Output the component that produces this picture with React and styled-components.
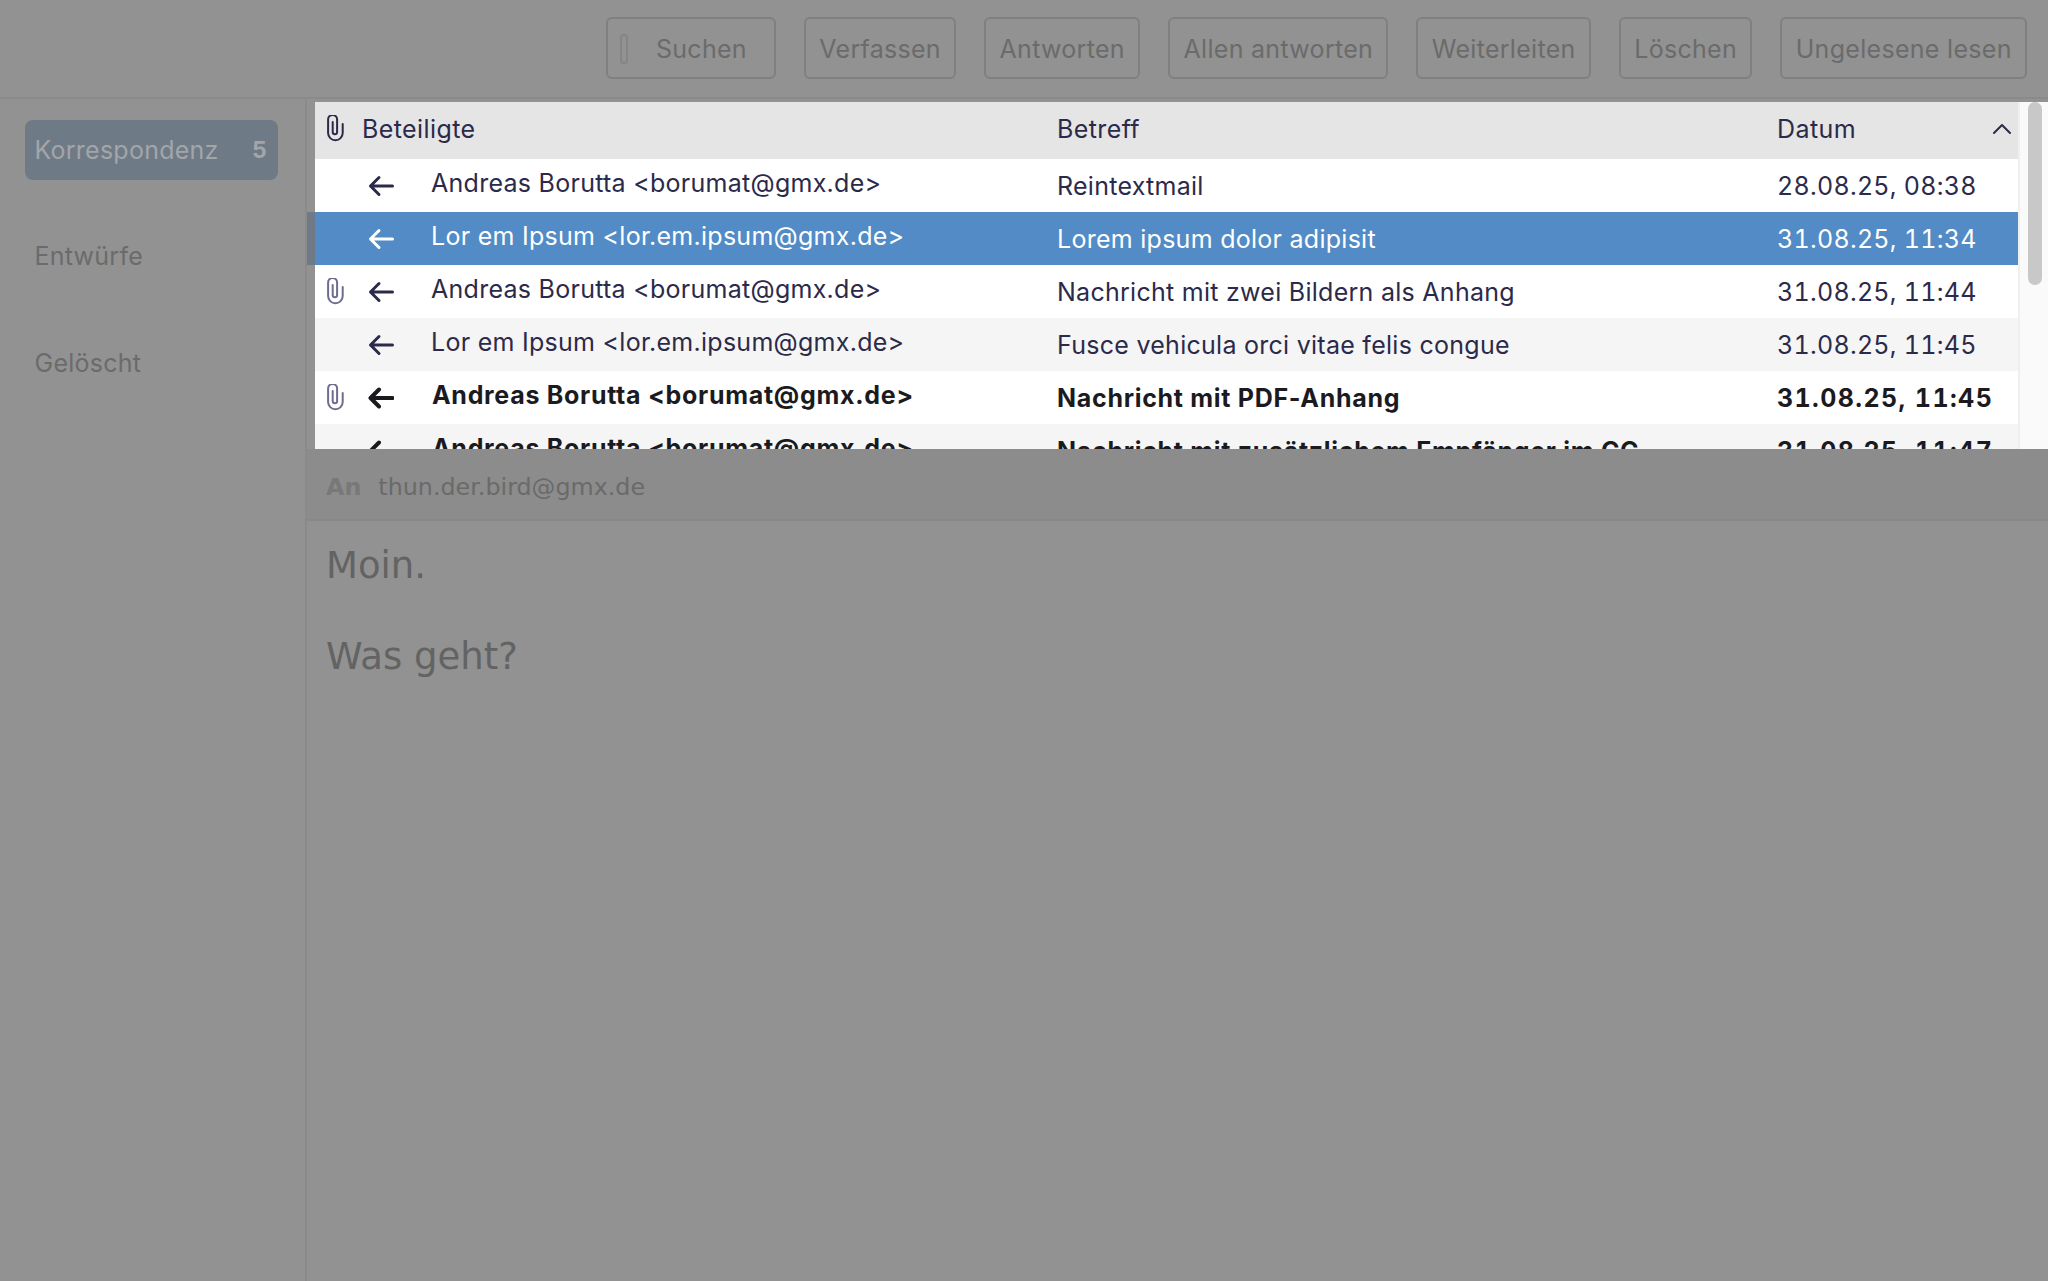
import styled, { createGlobalStyle } from "styled-components";

const GlobalStyle = createGlobalStyle`
  html, body {
    margin: 0;
    padding: 0;
    height: 100%;
    background: #929292;
  }
  * {
    box-sizing: border-box;
  }
`;

const Page = styled.div`
  width: 2048px;
  height: 1281px;
  display: flex;
  flex-direction: column;
  overflow: hidden;
  background: #929292;
  font-family: Inter, "Liberation Sans", sans-serif;
`;

const Toolbar = styled.div`
  height: 99px;
  flex: none;
  display: flex;
  justify-content: flex-end;
  align-items: flex-start;
  gap: 28px;
  padding: 17px 21px 0 0;
  border-bottom: 2px solid #8a8a8a;
`;

const ToolButton = styled.div`
  height: 62px;
  display: flex;
  align-items: center;
  padding: 2px 13.3px 0;
  border: 2px solid #808080;
  border-radius: 6px;
  color: #6b6b6b;
  font-size: 25px;
  letter-spacing: 0.3px;
  white-space: nowrap;
`;

const SearchButton = styled(ToolButton)`
  padding: 2px 27px 0 12px;
  gap: 28px;
`;

const SearchPill = styled.span`
  width: 8px;
  height: 30px;
  border: 2px solid #858585;
  border-radius: 4px;
`;

const Body = styled.div`
  flex: 1;
  display: flex;
  min-height: 0;
`;

const Sidebar = styled.div`
  width: 307px;
  flex: none;
  display: flex;
  flex-direction: column;
  gap: 47px;
  padding: 21px 27px 0 25px;
  border-right: 2px solid #8a8a8a;
`;

const Folder = styled.div`
  height: 60px;
  display: flex;
  align-items: center;
  justify-content: space-between;
  padding: ${(p) => (p.$active ? "0 11px 0 9.5px" : "0 11px 2px 9.5px")};
  border-radius: 8px;
  background: ${(p) => (p.$active ? "#6f7a87" : "transparent")};
  color: ${(p) => (p.$active ? "#a3a5a9" : "#6b6b6b")};
  font-size: 25px;
  letter-spacing: 0.25px;
`;

const Count = styled.span`
  font-weight: 700;
  font-size: 23px;
`;

const Main = styled.div`
  flex: 1;
  min-width: 0;
  display: flex;
  flex-direction: column;
`;

const ListPane = styled.div`
  height: 350px;
  flex: none;
  display: flex;
  padding: 3px 0 0 8px;
`;

const List = styled.div`
  flex: 1;
  min-width: 0;
  height: 347px;
  background: #fff;
`;

const ListClip = styled.div`
  height: 100%;
  overflow: hidden;
  margin-left: -8px;
  padding-left: 8px;
`;

const Scrollbar = styled.div`
  width: 30px;
  flex: none;
  padding: 0 6px 0 8px;
  background: #fafafa;
  border-left: 2px solid #efefef;
`;

const Thumb = styled.div`
  height: 183px;
  border-radius: 8px;
  background: #c8c8c8;
`;

const HeadRow = styled.div`
  height: 57px;
  display: grid;
  grid-template-columns: 47px 695px 720px 1fr;
  align-items: center;
  padding-bottom: 3px;
  background: #e5e5e5;
  color: #2c2a4a;
  font-size: 25px;
  letter-spacing: 0.4px;
`;

const Row = styled.div`
  position: relative;
  height: 53px;
  display: grid;
  grid-template-columns: 47px 69px 626px 720px 1fr;
  align-items: center;
  white-space: nowrap;
  font-size: 25px;
  letter-spacing: ${(p) => (p.$unread ? "0.7px" : "0.27px")};
  font-weight: ${(p) => (p.$unread ? 700 : 400)};
  color: ${(p) => (p.$selected ? "#fff" : p.$unread ? "#1b1b1f" : "#2c2a4a")};
  background: ${(p) =>
    p.$selected ? "#528bc5" : p.$odd ? "#f5f5f5" : "#fff"};
  &::before {
    content: ${(p) => (p.$selected ? '""' : "none")};
    position: absolute;
    left: -8px;
    top: 0;
    width: 8px;
    height: 100%;
    background: #6f7a87;
  }
`;

const ClipCell = styled.div`
  display: flex;
  justify-content: center;
  padding-right: 6px;
  color: ${(p) => (p.$head ? "#2c2a4a" : "#6f6d8f")};
`;

const ArrowCell = styled.div`
  display: flex;
  padding-left: 6px;
`;

const Person = styled.div`
  padding-bottom: 6px;
  padding-left: ${(p) => (p.$unread ? "1px" : "0")};
`;

const DateCell = styled.div`
  font-variant-numeric: tabular-nums;
  letter-spacing: ${(p) => (p.$unread ? "1.4px" : "0.27px")};
`;

const Chevron = styled.div`
  display: flex;
  padding-right: 6px;
`;

const HeadDate = styled.div`
  display: flex;
  justify-content: space-between;
  align-items: center;
`;

const DetailHead = styled.div`
  height: 72px;
  flex: none;
  display: flex;
  align-items: center;
  gap: 17px;
  padding: 6px 0 0 19px;
  background: #8c8c8c;
  border-bottom: 2px solid #888888;
  color: #6a6a6a;
  font-family: "DejaVu Sans", sans-serif;
  font-size: 23.8px;
`;

const DetailLabel = styled.span`
  font-weight: 700;
  color: #787878;
`;

const Message = styled.div`
  flex: 1;
  padding: 22px 19px;
  color: #636363;
  font-family: "DejaVu Sans", sans-serif;
  font-size: 37px;
  line-height: 45px;
`;

const Para = styled.p`
  margin: 0 0 46px;
`;

const ClipIcon = () => (
  <svg width="18" height="28" viewBox="0 0 18 28" fill="none" stroke="currentColor" strokeWidth="2" strokeLinecap="round">
    <path d="M15.7 9V18a7.3 7.3 0 0 1-14.6 0V4.5a4.5 4.5 0 0 1 9 0V17a2.2 2.2 0 0 1-4.4 0V7" />
  </svg>
);

const ArrowIcon = ({ bold }) => (
  <svg width="26" height="22" viewBox="0 0 26 22" fill="none" stroke="currentColor" strokeWidth={bold ? 4 : 3} strokeLinecap="round" strokeLinejoin="round">
    <path d="M2.5 11H24.5M11 2.5 2.5 11 11 19.5" />
  </svg>
);

const mails = [
  { from: "Andreas Borutta <borumat@gmx.de>", subject: "Reintextmail", date: "28.08.25, 08:38" },
  { from: "Lor em Ipsum <lor.em.ipsum@gmx.de>", subject: "Lorem ipsum dolor adipisit", date: "31.08.25, 11:34", selected: true },
  { from: "Andreas Borutta <borumat@gmx.de>", subject: "Nachricht mit zwei Bildern als Anhang", date: "31.08.25, 11:44", clip: true },
  { from: "Lor em Ipsum <lor.em.ipsum@gmx.de>", subject: "Fusce vehicula orci vitae felis congue", date: "31.08.25, 11:45", odd: true },
  { from: "Andreas Borutta <borumat@gmx.de>", subject: "Nachricht mit PDF-Anhang", date: "31.08.25, 11:45", clip: true, unread: true },
  { from: "Andreas Borutta <borumat@gmx.de>", subject: "Nachricht mit zusätzlichem Empfänger im CC", date: "31.08.25, 11:47", odd: true, unread: true },
];

const buttons = ["Verfassen", "Antworten", "Allen antworten", "Weiterleiten", "Löschen", "Ungelesene lesen"];

export default function App() {
  return (
    <Page>
      <GlobalStyle />
      <Toolbar>
        <SearchButton>
          <SearchPill />
          Suchen
        </SearchButton>
        {buttons.map((b) => (
          <ToolButton key={b}>{b}</ToolButton>
        ))}
      </Toolbar>
      <Body>
        <Sidebar>
          <Folder $active>
            Korrespondenz
            <Count>5</Count>
          </Folder>
          <Folder>Entwürfe</Folder>
          <Folder>Gelöscht</Folder>
        </Sidebar>
        <Main>
          <ListPane>
            <List>
              <ListClip>
                <HeadRow>
                  <ClipCell $head>
                    <ClipIcon />
                  </ClipCell>
                  <div>Beteiligte</div>
                  <div>Betreff</div>
                  <HeadDate>
                    Datum
                    <Chevron>
                      <svg width="20" height="12" viewBox="0 0 20 12" fill="none" stroke="currentColor" strokeWidth="2" strokeLinecap="round" strokeLinejoin="round">
                        <path d="M2 10 10 2l8 8" />
                      </svg>
                    </Chevron>
                  </HeadDate>
                </HeadRow>
                {mails.map((m) => (
                  <Row key={m.date + m.subject} $selected={m.selected} $odd={m.odd} $unread={m.unread}>
                    <ClipCell>{m.clip && <ClipIcon />}</ClipCell>
                    <ArrowCell>
                      <ArrowIcon bold={m.unread} />
                    </ArrowCell>
                    <Person $unread={m.unread}>{m.from}</Person>
                    <div>{m.subject}</div>
                    <DateCell $unread={m.unread}>{m.date}</DateCell>
                  </Row>
                ))}
              </ListClip>
            </List>
            <Scrollbar>
              <Thumb />
            </Scrollbar>
          </ListPane>
          <DetailHead>
            <DetailLabel>An</DetailLabel>
            thun.der.bird@gmx.de
          </DetailHead>
          <Message>
            <Para>Moin.</Para>
            <Para>Was geht?</Para>
          </Message>
        </Main>
      </Body>
    </Page>
  );
}
